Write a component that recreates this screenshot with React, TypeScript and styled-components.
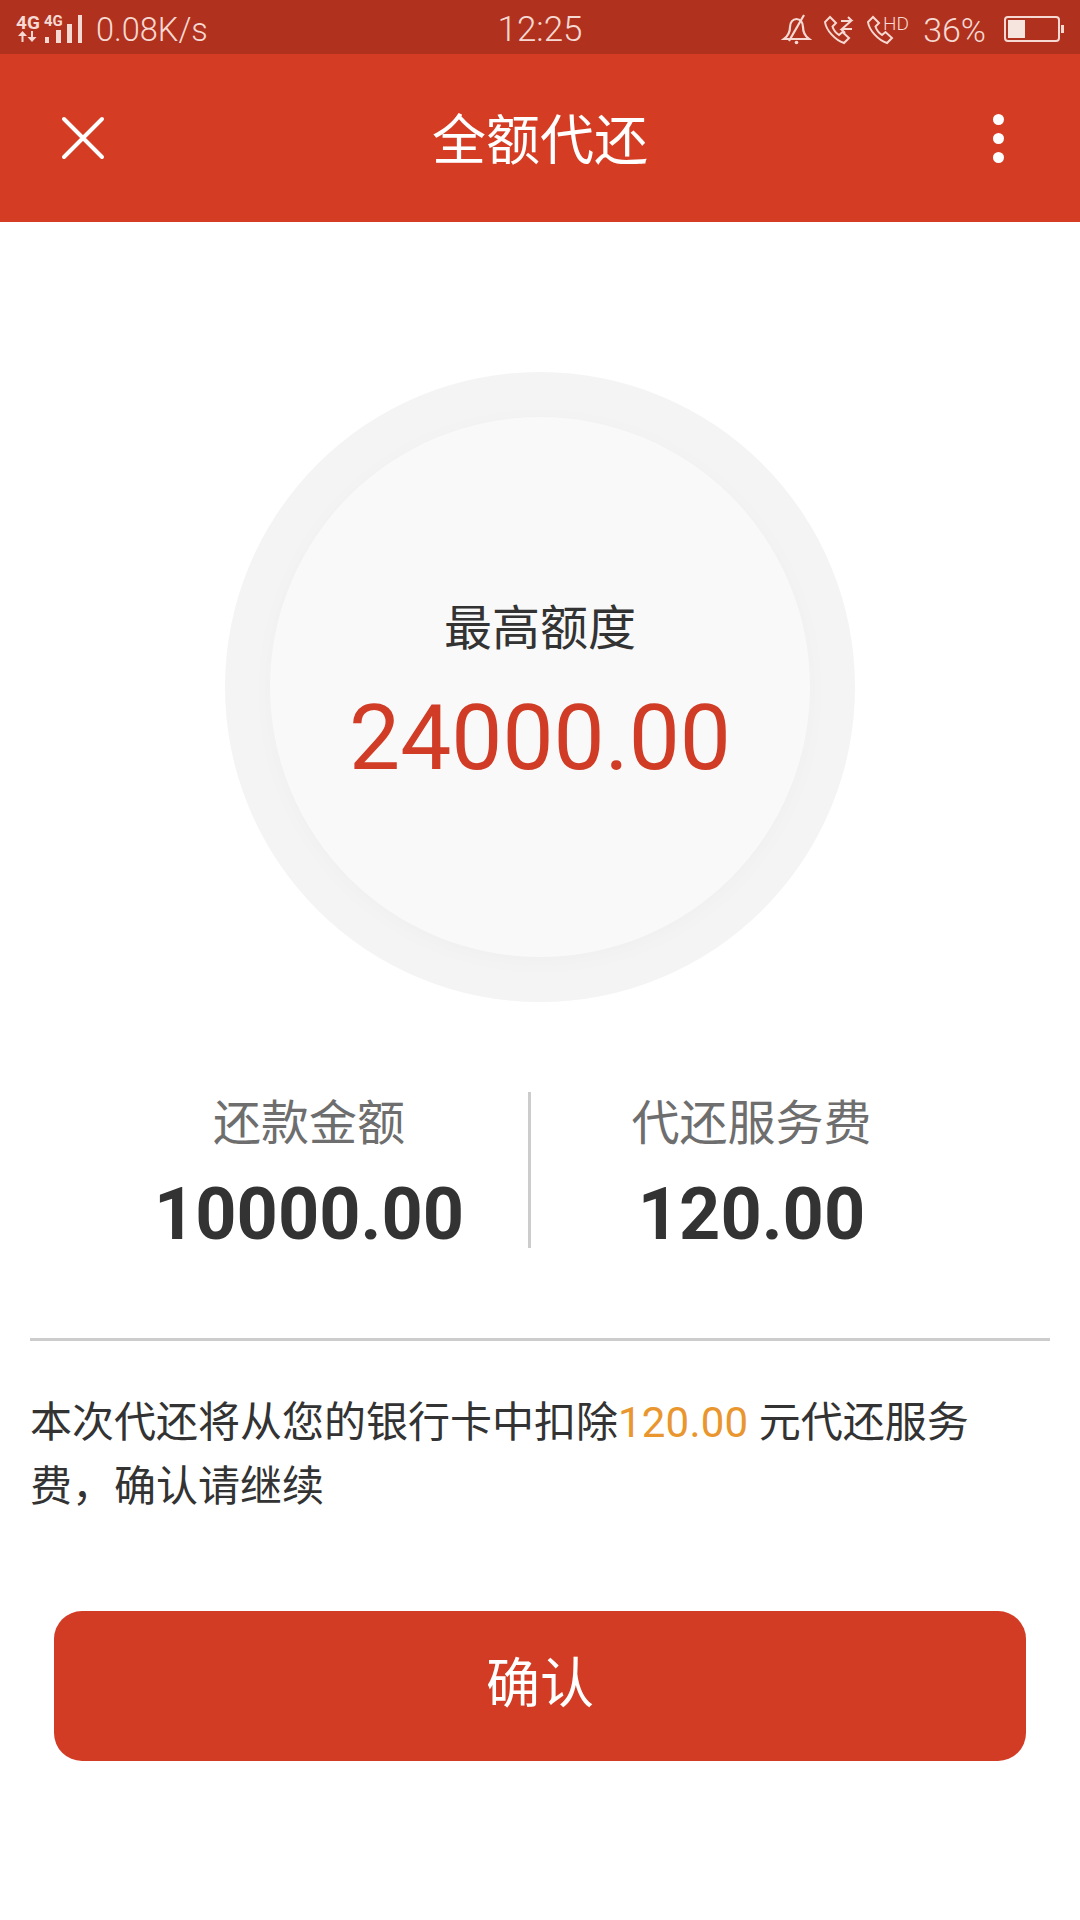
import React from 'react';
import styled, { createGlobalStyle } from 'styled-components';

const GlobalStyle = createGlobalStyle`
  html, body {
    margin: 0;
    padding: 0;
    background: #fff;
    font-family: Roboto, "Noto Sans CJK SC", sans-serif;
  }
`;

const INK = '#f6d9d3';

const Page = styled.div`
  width: 1080px;
  height: 1920px;
  background: #fff;
  overflow: hidden;
`;

const StatusBar = styled.div`
  height: 54px;
  background: #b0321e;
  color: ${INK};
  display: grid;
  grid-template-columns: 1fr auto 1fr;
  align-items: center;
  padding: 0 16px;
`;

const StatusLeft = styled.div`
  display: flex;
  align-items: center;
  gap: 13px;
`;

const StatusRight = styled.div`
  display: flex;
  align-items: center;
  justify-content: flex-end;
  gap: 11px;
`;

const StatusText = styled.span`
  font-size: 32.5px;
  font-weight: 300;
  line-height: 54px;
  padding-top: 3px;
`;

const Clock = styled(StatusText)`
  font-size: 35px;
`;

const Percent = styled(StatusText)`
  font-size: 34px;
  margin: 0 7px 0 2px;
`;

const Header = styled.div`
  height: 168px;
  background: #d43c24;
  color: #fff;
  display: grid;
  grid-template-columns: 1fr auto 1fr;
  align-items: center;
  padding: 0 62px;
`;

const Title = styled.div`
  font-size: 54px;
  margin-bottom: 4px;
`;

const Dots = styled.div`
  display: flex;
  flex-direction: column;
  gap: 8px;
  justify-self: end;
  margin-right: 14px;
`;

const Dot = styled.span`
  width: 11px;
  height: 11px;
  border-radius: 50%;
  background: #fff;
`;

const Ring = styled.div`
  width: 630px;
  height: 630px;
  margin: 150px auto 0;
  border-radius: 50%;
  background: #f4f4f4;
  display: flex;
  align-items: center;
  justify-content: center;
`;

const Disc = styled.div`
  width: 540px;
  height: 540px;
  box-sizing: border-box;
  border-radius: 50%;
  background: #f9f9f9;
  box-shadow: 0 4px 24px rgba(0, 0, 0, 0.025);
  display: flex;
  flex-direction: column;
  align-items: center;
  padding-top: 184px;
`;

const RingLabel = styled.div`
  font-size: 48px;
  line-height: 56px;
  color: #333;
`;

const RingValue = styled.div`
  font-size: 91px;
  line-height: 104px;
  margin-top: 29px;
  color: #d03c25;
`;

const Stats = styled.div`
  display: grid;
  grid-template-columns: 528px 3px 1fr;
  margin-top: 90px;
  height: 156px;
`;

const Stat = styled.div<{ $left?: number; $right?: number }>`
  display: flex;
  flex-direction: column;
  align-items: center;
  padding: 0 ${(p) => p.$right ?? 0}px 0 ${(p) => p.$left ?? 0}px;
`;

const StatLabel = styled.div`
  font-size: 48px;
  line-height: 60px;
  margin-top: 2px;
  color: #6e6e6e;
`;

const StatValue = styled.div`
  font-size: 72px;
  line-height: 66px;
  margin-top: 28px;
  font-weight: 700;
  color: #333;
`;

const VLine = styled.div`
  background: #ccc;
`;

const Rule = styled.div`
  height: 3px;
  background: #ccc;
  margin: 90px 30px 0;
`;

const Notice = styled.p`
  margin: 50px 90px 0 30px;
  font-size: 42px;
  line-height: 64px;
  color: #333;
`;

const Amount = styled.span`
  color: #e9962e;
  letter-spacing: 0.2px;
`;

const Confirm = styled.button`
  display: block;
  width: 972px;
  height: 150px;
  margin: 92px auto 0;
  padding: 0 0 14px;
  border: 0;
  border-radius: 28px;
  background: #d23c24;
  color: #fff;
  font-family: inherit;
  font-size: 54px;
`;

const Icon = styled.svg`
  display: block;
  flex: none;
  overflow: visible;
`;

const CloseIcon = () => (
  <Icon width="42" height="42" viewBox="0 0 42 42" stroke="#fff" strokeWidth="4" strokeLinecap="round">
    <path d="M2 2l38 38M40 2L2 40" />
  </Icon>
);

const SignalIcon = () => (
  <Icon width="67" height="28" viewBox="16 13 67 28" fill={INK}>
    <text x="16" y="27" fontSize="19" fontWeight="700" fontFamily="Roboto">4G</text>
    <text x="44" y="24" fontSize="15" fontWeight="700" fontFamily="Roboto">4G</text>
    <path d="M21.5 40v-6H18l4.5-5 4.500 5h-3.500v6zM31 29v6h-3.500l4.500 5 4.500-5H33v-6z" />
    <rect x="45" y="35" width="4" height="6" />
    <rect x="56" y="28" width="5" height="13" />
    <rect x="67" y="22" width="5" height="19" />
    <rect x="78" y="13" width="4" height="28" />
  </Icon>
);

const BellIcon = () => (
  <Icon width="30" height="30" viewBox="0 0 30 30" fill="none" stroke={INK} strokeWidth="2.200">
    <path d="M2 25c4-3 6-7 6-12 0-5 3-8 6.500-8s6.500 3 6.500 8c0 5 2 9 6 12z" />
    <path d="M22 1L7 27" />
    <circle cx="14.500" cy="28.500" r="1.800" fill={INK} stroke="none" />
  </Icon>
);

const HANDSET = 'M7 3L2 8c1 8 10 18 19 21l5-5-6.500-6-3.500 3c-3-2-5.500-5-6.500-8.500L13 9z';

const PhoneTransferIcon = () => (
  <Icon width="32" height="30" viewBox="0 0 32 30" fill="none" stroke={INK} strokeWidth="2">
    <path d={HANDSET} />
    <path d="M18 7h10l-9 8h10M25 3l4 4M22 19l-4-4" />
  </Icon>
);

const PhoneHdIcon = () => (
  <Icon width="44" height="30" viewBox="0 0 44 30" fill="none" stroke={INK} strokeWidth="2">
    <path d={HANDSET} />
    <text x="17" y="16" fontSize="19" fontFamily="Roboto" fontWeight="300" fill={INK} stroke="none">HD</text>
  </Icon>
);

const BatteryIcon = () => (
  <Icon width="60" height="26" viewBox="0 0 60 26" fill="none">
    <rect x="1" y="1" width="54" height="24" rx="3" stroke={INK} strokeWidth="2" />
    <rect x="4" y="4" width="17" height="18" fill="#f6e4df" />
    <rect x="57" y="9" width="3" height="8" fill={INK} />
  </Icon>
);

export default function App() {
  return (
    <Page>
      <GlobalStyle />
      <StatusBar>
        <StatusLeft>
          <SignalIcon />
          <StatusText>0.08K/s</StatusText>
        </StatusLeft>
        <Clock>12:25</Clock>
        <StatusRight>
          <BellIcon />
          <PhoneTransferIcon />
          <PhoneHdIcon />
          <Percent>36%</Percent>
          <BatteryIcon />
        </StatusRight>
      </StatusBar>
      <Header>
        <CloseIcon />
        <Title>全额代还</Title>
        <Dots>
          <Dot />
          <Dot />
          <Dot />
        </Dots>
      </Header>
      <Ring>
        <Disc>
          <RingLabel>最高额度</RingLabel>
          <RingValue>24000.00</RingValue>
        </Disc>
      </Ring>
      <Stats>
        <Stat $left={90}>
          <StatLabel>还款金额</StatLabel>
          <StatValue>10000.00</StatValue>
        </Stat>
        <VLine />
        <Stat $right={108}>
          <StatLabel>代还服务费</StatLabel>
          <StatValue>120.00</StatValue>
        </Stat>
      </Stats>
      <Rule />
      <Notice>
        本次代还将从您的银行卡中扣除<Amount>120.00</Amount> 元代还服务费，确认请继续
      </Notice>
      <Confirm>确认</Confirm>
    </Page>
  );
}
